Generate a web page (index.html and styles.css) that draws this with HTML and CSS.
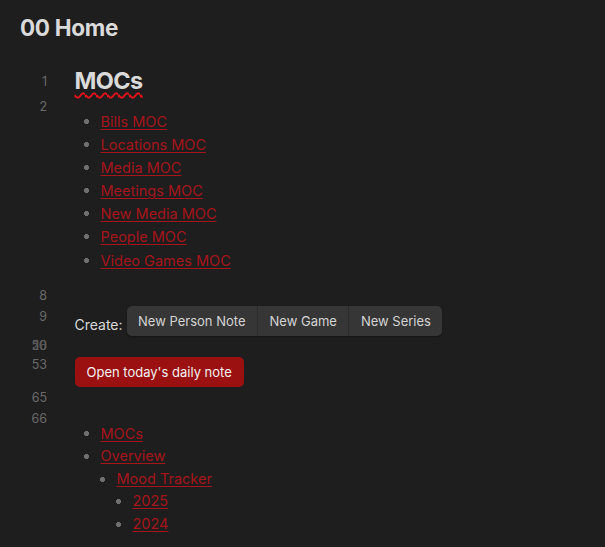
FILE: index.html
```html
<!DOCTYPE html>
<html lang="en">
<head>
<meta charset="utf-8">
<title>00 Home</title>
<link rel="stylesheet" href="styles.css">
</head>
<body>
<div class="page">
  <h1 class="title">00 Home</h1>
  <div class="editor">
    <div class="line line-h1">
      <div class="gutter">1</div>
      <div class="text"><h2 class="heading"><span class="misspelled">MOCs</span></h2></div>
    </div>
    <div class="line">
      <div class="gutter">2</div>
      <div class="text">
        <ul class="list list-top">
          <li><a href="#">Bills MOC</a></li>
          <li><a href="#">Locations MOC</a></li>
          <li><a href="#">Media MOC</a></li>
          <li><a href="#">Meetings MOC</a></li>
          <li><a href="#">New Media MOC</a></li>
          <li><a href="#">People MOC</a></li>
          <li><a href="#">Video Games MOC</a></li>
        </ul>
      </div>
    </div>
    <div class="line line-empty">
      <div class="gutter">8</div>
      <div class="text"></div>
    </div>
    <div class="line line-21">
      <div class="gutter">9</div>
      <div class="text create">
        <span class="create-label">Create:</span>
        <div class="btn-group">
          <button class="gbtn">New Person Note</button>
          <button class="gbtn">New Game</button>
          <button class="gbtn">New Series</button>
        </div>
      </div>
    </div>
    <div class="line line-stack">
      <div class="gutter stack"><span>10</span><span>26</span><span>50</span></div>
      <div class="text"></div>
    </div>
    <div class="line line-21">
      <div class="gutter">53</div>
      <div class="text"><button class="accent-btn">Open today's daily note</button></div>
    </div>
    <div class="line line-empty">
      <div class="gutter">65</div>
      <div class="text"></div>
    </div>
    <div class="line line-21">
      <div class="gutter">66</div>
      <div class="text">
        <ul class="list list-bottom">
          <li><a href="#">MOCs</a></li>
          <li><a href="#">Overview</a>
            <ul class="list">
              <li><a href="#">Mood Tracker</a>
                <ul class="list">
                  <li><a href="#">2025</a></li>
                  <li><a href="#">2024</a></li>
                </ul>
              </li>
            </ul>
          </li>
        </ul>
      </div>
    </div>
  </div>
</div>
</body>
</html>
```
FILE: styles.css
```css
html, body {
  margin: 0;
  background: #1e1e1e;
}
body {
  font-family: Inter, "Noto Sans", sans-serif;
  color: #dadada;
  font-size: 14.5px;
}
.page {
  padding: 14px 20px 0;
}
.title {
  margin: 0;
  font-size: 22.5px;
  font-weight: 700;
  letter-spacing: -0.3px;
  line-height: 27.6px;
  color: #dadada;
}
.editor {
  margin-top: 24.4px;
}
.line {
  display: flex;
}
.gutter {
  flex: none;
  width: 27px;
  margin-right: 27.5px;
  text-align: right;
  font-size: 12.5px;
  line-height: 23px;
  color: #6a6a6a;
}
.text {
  flex: 1;
  min-width: 0;
}
.line-h1 .gutter {
  line-height: 27px;
  padding-top: 2px;
}
.heading {
  margin: 0;
  font-size: 23.5px;
  font-weight: 700;
  letter-spacing: -0.6px;
  line-height: 29px;
  color: #dadada;
}
.misspelled {
  text-decoration: underline wavy #e3121a;
  text-decoration-thickness: 1.5px;
  text-underline-offset: 3px;
}
.list {
  list-style: none;
  margin: 0;
  padding: 0;
}
.list li {
  padding-left: 26px;
  line-height: 23.1px;
  background: radial-gradient(circle closest-side, #6e6e6e 92%, transparent 100%) no-repeat 9px 9px / 5px 5px;
}
.list .list {
  margin-left: -10px;
}
.list-top {
  margin-top: 15px;
  margin-bottom: 13.3px;
}
.list-bottom {
  margin-top: 14.7px;
}
.list-bottom li {
  line-height: 22.6px;
  background-position: 9px 8.8px;
}
.list a {
  color: #a5151c;
  text-decoration: underline;
  text-decoration-color: #a5151c;
  text-decoration-thickness: 1px;
  text-underline-offset: 1.5px;
}
.line-empty {
  min-height: 21px;
}
.line-empty .gutter,
.line-21 .gutter {
  line-height: 21px;
}
.create {
  display: flex;
  align-items: flex-end;
}
.create-label {
  font-size: 14px;
  line-height: 23px;
  color: #dadada;
}
.btn-group {
  display: flex;
  margin-left: 4px;
  border-radius: 5px;
  overflow: hidden;
  box-shadow: 0 1px 2px rgba(0, 0, 0, 0.35);
}
.gbtn {
  height: 30px;
  padding: 0 11.5px;
  border: none;
  border-right: 1px solid #2b2b2b;
  background: #363636;
  color: #d4d4d4;
  font-family: Inter, "Noto Sans", sans-serif;
  font-size: 13px;
  line-height: 30px;
}
.gbtn:last-child {
  border-right: none;
}
.line-stack {
  height: 18px;
}
.stack {
  display: grid;
  line-height: 18px;
  padding-top: 1px;
  color: #5c5c5c;
}
.stack span {
  grid-area: 1 / 1;
}
.accent-btn {
  margin-top: 3px;
  height: 30px;
  padding: 0 12px;
  border: none;
  border-radius: 5px;
  background: #9b1111;
  color: #f2f2f2;
  font-family: Inter, "Noto Sans", sans-serif;
  font-size: 13px;
  line-height: 30px;
}
```
